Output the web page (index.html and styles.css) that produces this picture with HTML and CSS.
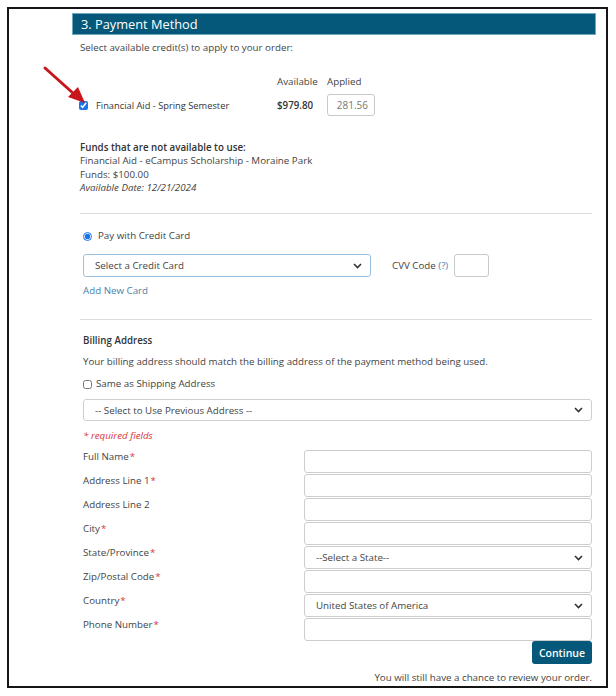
FILE: index.html
```html
<!DOCTYPE html>
<html lang="en">
  <head>
    <meta charset="UTF-8" />
    <meta name="viewport" content="width=device-width, initial-scale=1.0" />
    <title>Payment Method</title>
    <link rel="stylesheet" href="styles.css">
  </head>

  <body>
    <div class="frame">
      <svg class="arrow" width="50" height="46" viewBox="0 0 50 46">
        <line x1="5" y1="5" x2="34" y2="31" stroke="#c8161d" stroke-width="3" stroke-linecap="round" />
        <polygon points="45,40 28,34 38,24" fill="#c8161d" />
      </svg>

      <div class="panel">
        <h2 class="bar">3. Payment Method</h2>

        <div class="credits">
          <p class="line">Select available credit(s) to apply to your order:</p>

          <div class="credit-head">
            <span class="col-avail">Available</span>
            <span class="col-applied">Applied</span>
          </div>
          <div class="credit-row">
            <label class="credit-name"><input type="checkbox" class="check" checked /> Financial Aid - Spring Semester</label>
            <span class="col-avail amount">$979.80</span>
            <input type="text" class="applied" value="281.56" />
          </div>

          <div class="unavailable">
            <p class="strong">Funds that are not available to use:</p>
            <p>Financial Aid - eCampus Scholarship - Moraine Park</p>
            <p>Funds: $100.00</p>
            <p class="date">Available Date: 12/21/2024</p>
          </div>
        </div>

        <div class="card">
          <label class="line radio-line"><input type="radio" class="radio" checked /> Pay with Credit Card</label>
          <div class="card-row">
            <div class="select select-card">
              <span>Select a Credit Card</span>
              <svg width="9" height="6" viewBox="0 0 9 6"><path d="M1 1 L4.5 4.5 L8 1" fill="none" stroke="#333" stroke-width="1.6" /></svg>
            </div>
            <span class="cvv">CVV Code <span class="help">(?)</span></span>
            <input type="text" class="cvv-input" />
          </div>
          <a class="line link" href="#">Add New Card</a>
        </div>

        <div class="billing">
          <p class="line strong title">Billing Address</p>
          <p class="line note">Your billing address should match the billing address of the payment method being used.</p>
          <label class="line same"><input type="checkbox" class="box" /> Same as Shipping Address</label>
          <div class="select select-prev">
            <span>-- Select to Use Previous Address --</span>
            <svg width="9" height="6" viewBox="0 0 9 6"><path d="M1 1 L4.5 4.5 L8 1" fill="none" stroke="#333" stroke-width="1.6" /></svg>
          </div>
          <p class="line required">* required fields</p>

          <div class="fields">
            <div class="field"><span class="label">Full Name<b>*</b></span><input type="text" class="input" /></div>
            <div class="field"><span class="label">Address Line 1<b>*</b></span><input type="text" class="input" /></div>
            <div class="field"><span class="label">Address Line 2</span><input type="text" class="input" /></div>
            <div class="field"><span class="label">City<b>*</b></span><input type="text" class="input" /></div>
            <div class="field">
              <span class="label">State/Province<b>*</b></span>
              <div class="select input">
                <span>--Select a State--</span>
                <svg width="9" height="6" viewBox="0 0 9 6"><path d="M1 1 L4.5 4.5 L8 1" fill="none" stroke="#333" stroke-width="1.6" /></svg>
              </div>
            </div>
            <div class="field"><span class="label">Zip/Postal Code<b>*</b></span><input type="text" class="input" /></div>
            <div class="field">
              <span class="label">Country<b>*</b></span>
              <div class="select input">
                <span>United States of America</span>
                <svg width="9" height="6" viewBox="0 0 9 6"><path d="M1 1 L4.5 4.5 L8 1" fill="none" stroke="#333" stroke-width="1.6" /></svg>
              </div>
            </div>
            <div class="field"><span class="label">Phone Number<b>*</b></span><input type="text" class="input" /></div>
          </div>

          <div class="actions">
            <button type="button" class="continue">Continue</button>
            <p class="line">You will still have a chance to review your order.</p>
          </div>
        </div>
      </div>
    </div>
  </body>
</html>
```

FILE: styles.css
```css
body {
  margin: 0;
  background: #ffffff;
  font-family: "Open Sans", "Liberation Sans", sans-serif;
  font-size: 9.75px;
  color: #444;
}

p {
  margin: 0;
}

.frame {
  position: relative;
  margin: 7px 0 0 7px;
  width: 597px;
  height: 677px;
  border: 2px solid #151515;
  overflow: hidden;
}

.arrow {
  position: absolute;
  left: 31px;
  top: 54px;
}

.panel {
  margin-left: 63px;
  width: 524px;
}

.bar {
  margin: 4px 0 0;
  height: 20px;
  padding-left: 8px;
  background-color: #06587a;
  border: 1px solid #6ea8c0;
  color: #ffffff;
  font-size: 12.8px;
  font-weight: normal;
  line-height: 21px;
}

.line {
  display: block;
  line-height: 14px;
}

.strong {
  font-weight: 600;
  color: #333;
}

/* credits */
.credits {
  padding: 0 4px 0 8px;
}

.credits > .line {
  margin-top: 6px;
}

.credit-head {
  display: flex;
  margin-top: 20px;
  line-height: 14px;
  padding-left: 197px;
}

.col-avail {
  width: 50px;
}

.credit-row {
  display: flex;
  align-items: center;
  margin-top: 5px;
  height: 22px;
}

.credit-name {
  display: flex;
  align-items: center;
  width: 197px;
  font-size: 9.3px;
  color: #333;
}

.check {
  width: 9px;
  height: 9px;
  margin: 0 8px 0 -1px;
  accent-color: #1a73e8;
}

.amount {
  font-weight: 600;
  color: #333;
}

.applied {
  box-sizing: border-box;
  width: 48px;
  height: 22px;
  padding: 0 6px;
  border: 1px solid #c9c9c9;
  border-radius: 3px;
  text-align: right;
  font-family: inherit;
  font-size: 10px;
  color: #777;
}

.unavailable {
  margin-top: 25px;
  line-height: 13.3px;
}

.date {
  font-style: italic;
}

/* credit card */
.card {
  margin: 19px 4px 0 8px;
  border-top: 1px solid #dcdcdc;
  padding-left: 3px;
}

.radio-line {
  display: flex;
  align-items: center;
  margin-top: 15px;
}

.radio {
  width: 9px;
  height: 9px;
  margin: 0 6px 0 0;
  accent-color: #1a73e8;
}

.card-row {
  display: flex;
  align-items: center;
  margin-top: 11px;
}

.select {
  box-sizing: border-box;
  display: flex;
  align-items: center;
  justify-content: space-between;
  height: 23px;
  padding: 0 8px 0 11px;
  border: 1px solid #cfcfcf;
  border-radius: 3px;
  background: #ffffff;
  color: #444;
}

.select-card {
  width: 288px;
  border-color: #9cc2e3;
}

.cvv {
  margin-left: 21px;
}

.help {
  color: #4d82b0;
}

.cvv-input {
  box-sizing: border-box;
  width: 35px;
  height: 23px;
  margin-left: 6px;
  border: 1px solid #c9c9c9;
  border-radius: 3px;
}

.link {
  margin-top: 7px;
  color: #4a7fab;
  text-decoration: none;
}

/* billing */
.billing {
  margin: 21px 4px 0 8px;
  border-top: 1px solid #dcdcdc;
  padding-left: 3px;
}

.title {
  margin-top: 14px;
}

.note {
  margin-top: 7px;
}

.same {
  display: flex;
  align-items: center;
  margin-top: 8px;
}

.box {
  width: 9px;
  height: 9px;
  margin: 0 4px 0 0;
}

.select-prev {
  margin-top: 8px;
  height: 22px;
}

.required {
  margin-top: 8px;
  color: #d9353b;
  font-style: italic;
}

.fields {
  display: flex;
  flex-direction: column;
  gap: 1px;
  margin-top: 7px;
}

.field {
  display: flex;
  justify-content: space-between;
}

.label {
  line-height: 14px;
}

.label b {
  font-weight: normal;
  color: #d9353b;
  margin-left: 1px;
}

.input {
  box-sizing: border-box;
  width: 288px;
  height: 23px;
  border: 1px solid #cdcdcd;
  border-radius: 3px;
  font-family: inherit;
  font-size: 9.75px;
}

.field .select {
  padding-left: 11px;
}

.actions {
  display: flex;
  flex-direction: column;
  align-items: flex-end;
}

.continue {
  margin-top: 0;
  width: 60px;
  height: 23px;
  padding: 0;
  border: none;
  border-radius: 3px;
  background-color: #06587a;
  color: #ffffff;
  font-family: inherit;
  font-size: 10.5px;
  font-weight: 600;
  cursor: pointer;
}

.actions .line {
  margin-top: 7px;
}
```
